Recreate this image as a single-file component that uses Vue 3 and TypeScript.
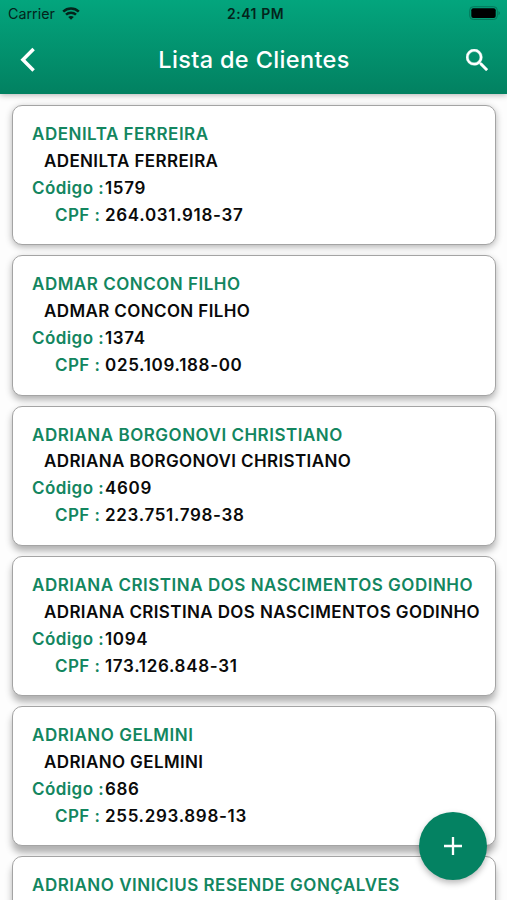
<script setup lang="ts">
interface Client {
  name: string
  code: string
  cpf: string
}

const clients: Client[] = [
  { name: 'ADENILTA FERREIRA', code: '1579', cpf: '264.031.918-37' },
  { name: 'ADMAR CONCON FILHO', code: '1374', cpf: '025.109.188-00' },
  { name: 'ADRIANA BORGONOVI CHRISTIANO', code: '4609', cpf: '223.751.798-38' },
  { name: 'ADRIANA CRISTINA DOS NASCIMENTOS GODINHO', code: '1094', cpf: '173.126.848-31' },
  { name: 'ADRIANO GELMINI', code: '686', cpf: '255.293.898-13' },
  { name: 'ADRIANO VINICIUS RESENDE GONÇALVES', code: '', cpf: '' },
]

const shadowFor = (index: number) => ({ '--drop': `${2 + index * 1.1}px` })
</script>

<template>
  <div class="screen">
    <header class="header">
      <div class="status">
        <div class="carrier">
          <span>Carrier</span>
          <svg width="18" height="13" viewBox="0 0 18 13" fill="none" stroke="#04241b" stroke-width="2.5">
            <path d="M1.2 4.6C5.6.4 12.4.4 16.8 4.6" />
            <path d="M4 7.7c2.8-2.6 7.2-2.6 10 0" />
            <path d="M9 12.8 6.2 10c1.6-1.4 4-1.4 5.6 0Z" fill="#04241b" stroke="none" />
          </svg>
        </div>
        <span class="clock">2:41 PM</span>
        <svg class="battery" width="32" height="15" viewBox="0 0 32 15">
          <rect x=".7" y=".7" width="27.6" height="12.8" rx="3.6" fill="none" stroke="#04775a" stroke-width="1" />
          <rect x="2.3" y="2.3" width="24.4" height="9.6" rx="2" fill="#000" />
          <path d="M29.5 5v4.2c1.9-.8 1.9-3.4 0-4.2Z" fill="#04775a" />
        </svg>
      </div>
      <div class="bar">
        <button class="icon-button back" aria-label="Voltar">
          <svg width="16" height="26" viewBox="0 0 16 26" fill="none" stroke="#fff" stroke-width="3.5">
            <path d="M13.6 2 2.9 12.8l10.7 10.8" />
          </svg>
        </button>
        <h1 class="title">Lista de Clientes</h1>
        <button class="icon-button search" aria-label="Buscar">
          <svg width="22" height="22" viewBox="3 3 17.49 17.49" fill="#fff" stroke="#fff" stroke-width=".3">
            <path d="M15.5 14h-.79l-.28-.27A6.471 6.471 0 0 0 16 9.5 6.5 6.5 0 1 0 9.5 16c1.61 0 3.09-.59 4.23-1.57l.27.28v.79l5 4.99L20.49 19l-4.99-5zm-6 0C7.01 14 5 11.99 5 9.5S7.01 5 9.5 5 14 7.01 14 9.5 11.99 14 9.5 14z" />
          </svg>
        </button>
      </div>
    </header>

    <main class="list">
      <article v-for="(client, i) in clients" :key="client.name" class="card" :style="shadowFor(i)">
        <div class="line name">{{ client.name }}</div>
        <template v-if="client.code">
          <div class="line alias">{{ client.name }}</div>
          <div class="line pair"><span class="key">Código :</span><span class="digits">{{ client.code }}</span></div>
          <div class="line pair"><span class="key cpf">CPF :</span><span class="digits">{{ client.cpf }}</span></div>
        </template>
      </article>
    </main>

    <button class="fab" aria-label="Adicionar">
      <svg width="18" height="18" viewBox="0 0 18 18" stroke="#fff" stroke-width="2.3">
        <path d="M9 0v18M0 9h18" />
      </svg>
    </button>
  </div>
</template>

<style>
body {
  margin: 0;
  overflow: hidden;
}
</style>

<style scoped>
.screen {
  position: relative;
  display: flex;
  flex-direction: column;
  width: 507px;
  height: 900px;
  overflow: hidden;
  background: #fdfdfd;
  font-family: Inter, "Liberation Sans", sans-serif;
}
.header {
  position: relative;
  z-index: 1;
  flex: none;
  height: 94px;
  background: linear-gradient(#03a57d, #028161);
  box-shadow: 0 1px 6px rgba(0, 0, 0, 0.3);
}
.status {
  display: grid;
  grid-template-columns: 1fr auto 1fr;
  align-items: center;
  height: 27px;
  padding: 0 6px 0 8px;
  color: #04241b;
  font-size: 14.3px;
}
.carrier {
  display: flex;
  align-items: center;
  gap: 7px;
}
.clock {
  padding-left: 2px;
  font-size: 13.9px;
  font-weight: 600;
  letter-spacing: 0.6px;
}
.battery {
  justify-self: end;
}
.bar {
  display: grid;
  grid-template-columns: 1fr auto 1fr;
  align-items: center;
  height: 65px;
  padding: 0 19px 0 20px;
}
.icon-button {
  display: flex;
  padding: 0;
  border: 0;
  background: none;
}
.back {
  justify-self: start;
}
.search {
  justify-self: end;
}
.title {
  margin: 0;
  color: #fff;
  font-size: 23.5px;
  font-weight: 500;
  letter-spacing: 0.35px;
}
.list {
  display: flex;
  flex-direction: column;
  gap: 10px;
  padding: 11px 11px 0 12px;
}
.card {
  flex: none;
  box-sizing: border-box;
  height: 140.3px;
  padding: 15px 0 0 19px;
  border: 1px solid #a4a4a4;
  border-radius: 10px;
  background: #fff;
  box-shadow: 0 var(--drop) 7px rgba(0, 0, 0, 0.3);
}
.line {
  height: 26.9px;
  color: #0a0a0a;
  font-size: 17px;
  font-weight: 600;
  line-height: 26.9px;
  letter-spacing: 0.38px;
  white-space: nowrap;
}
.line.name {
  color: #13865f;
  letter-spacing: 0.51px;
}
.alias {
  padding-left: 12px;
}
.pair {
  display: flex;
}
.key {
  box-sizing: border-box;
  width: 73px;
  color: #13865f;
  letter-spacing: 0.42px;
}
.cpf {
  padding-left: 23px;
}
.digits {
  letter-spacing: 0.68px;
}
.fab {
  position: absolute;
  right: 20px;
  bottom: 20px;
  display: flex;
  align-items: center;
  justify-content: center;
  width: 68px;
  height: 68px;
  padding: 0;
  border: 0;
  border-radius: 50%;
  background: #048262;
  box-shadow: 0 3px 6px rgba(0, 0, 0, 0.28);
  z-index: 2;
}
</style>
